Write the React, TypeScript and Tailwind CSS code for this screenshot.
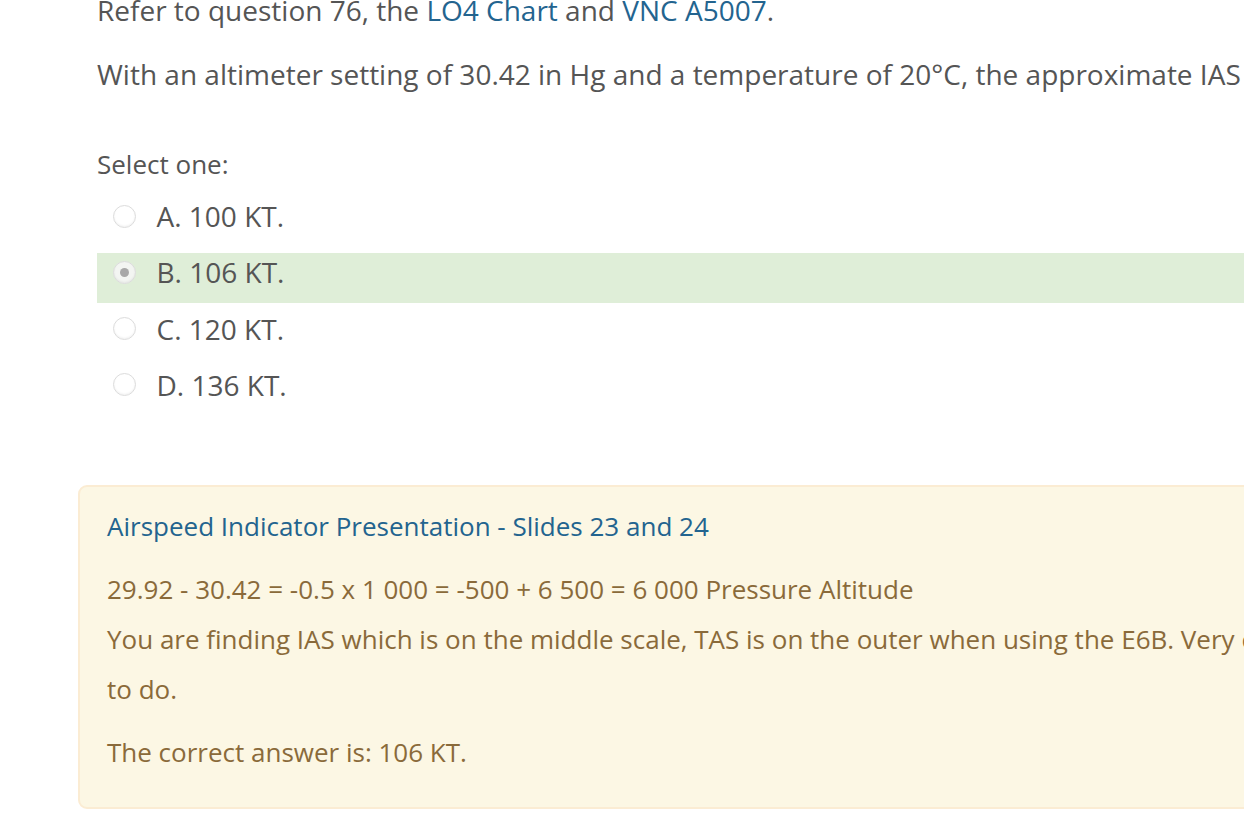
import React from "react";

const options = [
  { key: "A", label: "A. 100 KT.", checked: false },
  { key: "B", label: "B. 106 KT.", checked: true },
  { key: "C", label: "C. 120 KT.", checked: false },
  { key: "D", label: "D. 136 KT.", checked: false },
];

const Radio = ({ checked }: { checked: boolean }) => (
  <span
    className={`flex items-center justify-center w-[23px] h-[23px] rounded-full border border-[#dcdcdc] shadow-[inset_0_-1px_2px_rgba(0,0,0,0.06)] ${
      checked ? "bg-[#f3f5f2]" : "bg-white"
    }`}
  >
    {checked && <span className="w-[9px] h-[9px] rounded-full bg-[#a8a8a8]" />}
  </span>
);

const App = () => {
  return (
    <div className="w-[1244px] h-[830px] overflow-hidden bg-white text-[#555] text-[26px] font-['Open_Sans',sans-serif]">
      <div className="pl-[97px] -mt-[15px]">
        <p className="text-[28px] leading-[50px] whitespace-nowrap">
          Refer to question 76, the{" "}
          <a className="text-[#23648f]">LO4 Chart</a> and{" "}
          <a className="text-[#23648f]">VNC A5007</a>.
        </p>
        <p className="mt-[14px] text-[28px] leading-[50px] whitespace-nowrap">
          With an altimeter setting of 30.42 in Hg and a temperature of 20°C,
          the approximate IAS
        </p>

        <div className="mt-[46px] leading-[38px]">Select one:</div>

        <div className="mt-[14px] flex flex-col">
          {options.map((o, i) => (
            <div
              key={o.key}
              className={`h-[50px] flex items-start ${i > 0 ? "mt-[6.33px]" : ""} ${
                o.checked ? "bg-[#dfeed8]" : ""
              }`}
            >
              <div className="h-[38px] flex items-center pl-[15.5px]">
                <Radio checked={o.checked} />
              </div>
              <span className="ml-[21px] text-[28px] leading-[38px]">{o.label}</span>
            </div>
          ))}
        </div>
      </div>

      <div className="pl-[78px] mt-[69px]">
        <div className="w-[1250px] h-[324px] rounded-[9px] border-2 border-[#fbecd3] bg-[#fcf7e4] text-[#8a6a3a] pl-[27px] pt-[14px]">
          <a className="block leading-[50px] text-[#23648f]">
            Airspeed Indicator Presentation - Slides 23 and 24
          </a>
          <p className="mt-[13px] leading-[50px] whitespace-nowrap">
            29.92 - 30.42 = -0.5 x 1 000 = -500 + 6 500 = 6 000 Pressure
            Altitude
            <br />
            You are finding IAS which is on the middle scale, TAS is on the
            outer when using the E6B. Very easy
            <br />
            to do.
          </p>
          <p className="mt-[13px] leading-[50px]">
            The correct answer is: 106 KT.
          </p>
        </div>
      </div>
    </div>
  );
};

export default App;
